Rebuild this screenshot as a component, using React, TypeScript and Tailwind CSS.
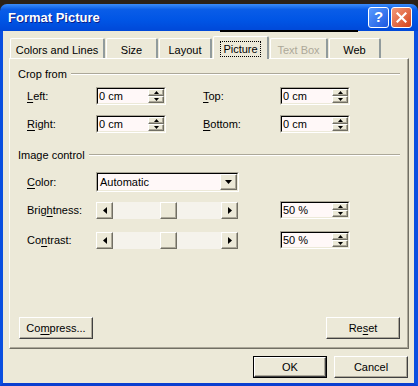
import React from "react";

const raised =
  "border border-t-white border-l-white border-r-[#716f64] border-b-[#716f64] shadow-[inset_-1px_-1px_0_#aca899] bg-[#ece9d8]";
const sunken =
  "border border-t-[#aca899] border-l-[#aca899] border-r-white border-b-white";

function Tri({ dir, w, h }: { dir: "up" | "down" | "left" | "right"; w: number; h: number }) {
  const pts: Record<string, string> = {
    up: `${w / 2},0 ${w},${h} 0,${h}`,
    down: `0,0 ${w},0 ${w / 2},${h}`,
    left: `${w},0 ${w},${h} 0,${h / 2}`,
    right: `0,0 ${w},${h / 2} 0,${h}`,
  };
  return (
    <svg width={w} height={h} viewBox={`0 0 ${w} ${h}`}>
      <polygon points={pts[dir]} fill="#000" />
    </svg>
  );
}

function Spin({ value }: { value: string }) {
  return (
    <div className={`flex h-[18px] w-[70px] ${sunken}`}>
      <div className="flex flex-1 border border-t-black border-l-black border-r-[#ece9d8] border-b-[#ece9d8] bg-[#fff8f8]">
        <span className="flex-1 pl-[1px] leading-[14px]">{value}</span>
        <div className="flex w-[16px] flex-col">
          <div className={`flex h-[8px] items-center justify-center ${raised}`}>
            <Tri dir="up" w={5} h={3} />
          </div>
          <div className={`flex h-[8px] items-center justify-center ${raised}`}>
            <Tri dir="down" w={5} h={3} />
          </div>
        </div>
      </div>
    </div>
  );
}

function Slider() {
  return (
    <div className="flex h-[17px] w-[142px]">
      <div className={`flex h-[17px] w-[17px] items-center justify-center ${raised}`}>
        <Tri dir="left" w={4} h={7} />
      </div>
      <div className="flex flex-1 bg-[#f5f3ec]">
        <div className="w-[47px]" />
        <div className={`h-[17px] w-[17px] ${raised}`} />
      </div>
      <div className={`flex h-[17px] w-[17px] items-center justify-center ${raised}`}>
        <Tri dir="right" w={4} h={7} />
      </div>
    </div>
  );
}

function Label({ k, rest, pre = "", w }: { k: string; rest: string; pre?: string; w: string }) {
  return (
    <span className={`${w} shrink-0`}>
      {pre}
      <span className="underline underline-offset-[2px]">{k}</span>
      {rest}
    </span>
  );
}

function Header({ text }: { text: string }) {
  return (
    <div className="flex h-[14px] items-center pl-[8px] pr-[8px]">
      <span>{text}</span>
      <div className="ml-[4px] h-[2px] flex-1 border-t border-t-[#aca899] border-b border-b-white" />
    </div>
  );
}

function Btn({ children, w, def }: { children: React.ReactNode; w: string; def?: boolean }) {
  return (
    <div className={`${w} h-[22px] ${def ? "border border-black" : ""}`}>
      <div className="flex h-full w-full items-center justify-center border border-t-white border-l-white border-r-[#404040] border-b-[#404040] shadow-[inset_-1px_-1px_0_#aca899] bg-[#ece9d8]">
        {children}
      </div>
    </div>
  );
}

function Tab({ label, w, sel, dis }: { label: string; w: string; sel?: boolean; dis?: boolean }) {
  return (
    <div
      className={`${w} ml-[1px] flex items-start justify-center rounded-t-[2px] border-t border-l border-t-white border-l-white border-r-2 border-r-[#919b9c] bg-[#ece9d8] ${
        sel ? "relative z-10 -mb-[1px] h-[23px] pt-[4px]" : "h-[20px] pt-[5px]"
      } ${dis ? "text-[#aca899]" : ""}`}
    >
      {sel ? (
        <span className="border border-dotted border-black px-[2px] leading-[14px]">{label}</span>
      ) : (
        <span className="leading-[13px]">{label}</span>
      )}
    </div>
  );
}

export default function App() {
  return (
    <div className="relative h-[386px] w-[418px] overflow-hidden bg-[#2b2118] font-['Liberation_Sans',Arial,sans-serif] text-[11px] text-black">
      <div className="mt-[4px] flex h-[382px] flex-col">
        {/* title bar */}
        <div className="relative flex h-[27px] items-center rounded-t-[7px] bg-[linear-gradient(#3c8cf8_0%,#0a5de8_20%,#0055e5_60%,#0048d8_100%)] pl-[8px] pr-[6px]">
          <span className="text-[13px] font-bold text-white [text-shadow:1px_1px_0_#0a1e8a]">Format Picture</span>
          <div className="ml-auto flex gap-[2px]">
            <div className="flex h-[21px] w-[21px] items-center justify-center rounded-[3px] border border-white bg-[linear-gradient(135deg,#5a9cff,#1b57e0)] text-[15px] font-bold text-white">
              ?
            </div>
            <div className="flex h-[21px] w-[21px] items-center justify-center rounded-[3px] border border-white bg-[linear-gradient(135deg,#f39a7a,#d4421a)]">
              <svg width="11" height="11" viewBox="0 0 11 11">
                <path d="M1.5 1.5 L9.5 9.5 M9.5 1.5 L1.5 9.5" stroke="#fff" strokeWidth="2.2" strokeLinecap="square" />
              </svg>
            </div>
          </div>
          <div className="absolute bottom-[-1px] left-[220px] h-[2px] w-[138px] bg-black" />
        </div>

        {/* body */}
        <div className="flex flex-1 flex-col border-l-[3px] border-r-[4px] border-b-[3px] border-l-[#0a4fe0] border-r-[#0a4fe0] border-b-[#0a3fd0] bg-[#ece9d8]">
          <div className="ml-[6px] mt-[5px] w-[400px]">
            {/* tabs */}
            <div className="flex h-[22px] items-end">
              <Tab label="Colors and Lines" w="w-[95px]" />
              <Tab label="Size" w="w-[52px]" />
              <Tab label="Layout" w="w-[53px]" />
              <Tab label="Picture" w="w-[56px]" sel />
              <Tab label="Text Box" w="w-[58px]" dis />
              <Tab label="Web" w="w-[52px]" />
            </div>

            {/* panel */}
            <div className="flex h-[291px] flex-col border border-t-white border-l-white border-r-[#716f64] border-b-[#716f64] shadow-[inset_-1px_-1px_0_#aca899]">
              <div className="mt-[8px]">
                <Header text="Crop from" />
              </div>
              <div className="mt-[6px] flex h-[18px] items-center pl-[17px]">
                <Label k="L" rest="eft:" w="w-[69px]" />
                <Spin value="0 cm" />
                <div className="w-[37px]" />
                <Label k="T" rest="op:" w="w-[77px]" />
                <Spin value="0 cm" />
              </div>
              <div className="mt-[10px] flex h-[18px] items-center pl-[17px]">
                <Label k="R" rest="ight:" w="w-[69px]" />
                <Spin value="0 cm" />
                <div className="w-[37px]" />
                <Label k="B" rest="ottom:" w="w-[77px]" />
                <Spin value="0 cm" />
              </div>

              <div className="mt-[15px]">
                <Header text="Image control" />
              </div>
              <div className="mt-[10px] flex h-[20px] items-center pl-[17px]">
                <Label k="C" rest="olor:" w="w-[69px]" />
                <div className={`flex h-[20px] w-[143px] ${sunken}`}>
                  <div className="flex flex-1 border border-t-black border-l-black border-r-[#ece9d8] border-b-[#ece9d8] bg-[#fff8f8]">
                    <span className="flex-1 pl-[2px] leading-[16px]">Automatic</span>
                    <div className={`flex w-[17px] items-center justify-center ${raised}`}>
                      <Tri dir="down" w={7} h={4} />
                    </div>
                  </div>
                </div>
              </div>
              <div className="mt-[9px] flex h-[18px] items-center pl-[17px]">
                <Label pre="Brig" k="h" rest="tness:" w="w-[69px]" />
                <Slider />
                <div className="w-[42px]" />
                <Spin value="50 %" />
              </div>
              <div className="mt-[12px] flex h-[18px] items-center pl-[17px]">
                <Label pre="Co" k="n" rest="trast:" w="w-[69px]" />
                <Slider />
                <div className="w-[42px]" />
                <Spin value="50 %" />
              </div>

              <div className="mb-[9px] mt-auto flex pl-[9px] pr-[8px]">
                <Btn w="w-[74px]">
                  Co<span className="underline underline-offset-[2px]">m</span>press...
                </Btn>
                <div className="flex-1" />
                <Btn w="w-[74px]">
                  Re<span className="underline underline-offset-[2px]">s</span>et
                </Btn>
              </div>
            </div>
          </div>

          {/* OK / Cancel */}
          <div className="mr-[6px] mt-[7px] flex justify-end gap-[7px]">
            <Btn w="w-[74px]" def>
              OK
            </Btn>
            <Btn w="w-[74px]">Cancel</Btn>
          </div>
        </div>
      </div>
    </div>
  );
}
